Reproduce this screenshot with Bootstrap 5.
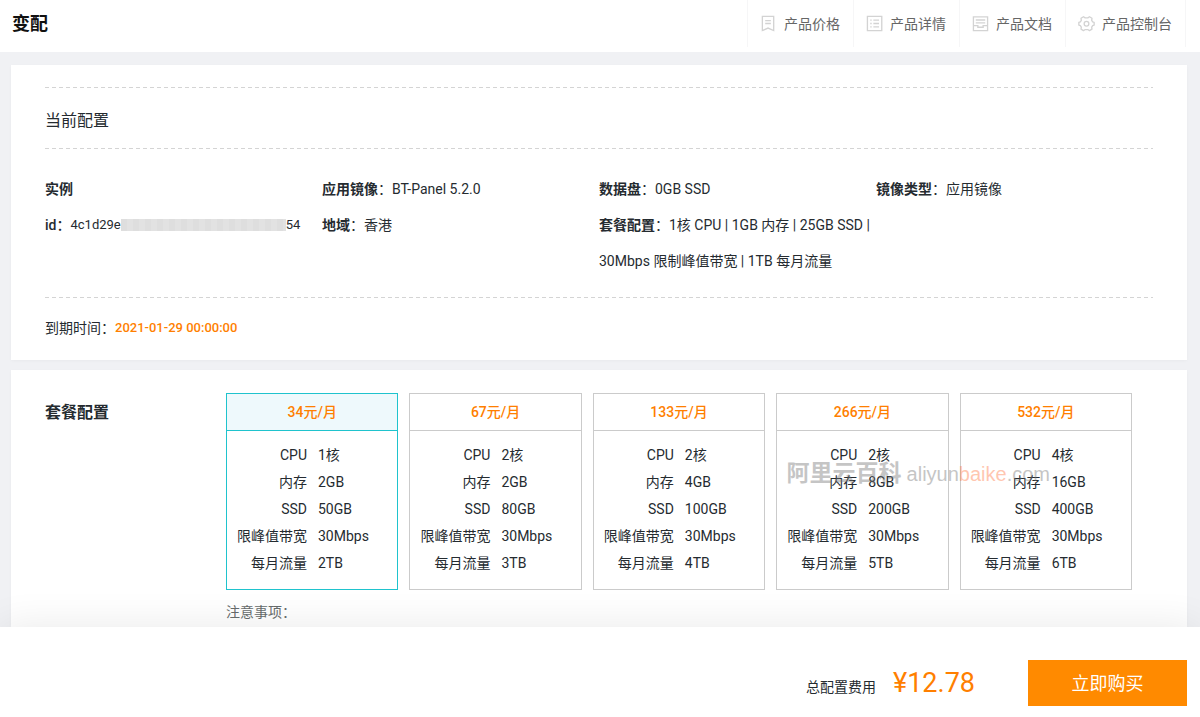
<!DOCTYPE html>
<html lang="zh-CN">
<head>
<meta charset="utf-8">
<meta name="viewport" content="width=device-width, initial-scale=1">
<title>变配</title>
<link rel="stylesheet" href="https://cdn.jsdelivr.net/npm/bootstrap@5.3.0/dist/css/bootstrap.min.css">
<style>
  body { font-family: Roboto, "Noto Sans CJK SC", sans-serif; font-size: 14px; line-height: 20px; color: #252b30; background: #f0f1f4; }
  .topbar { height: 52px; padding: 0 14px 5px 12px; }
  .topbar h1 { font-size: 18px; line-height: 24px; color: #111; }
  .topnav { border-right: 1px solid #f6f6f7; }
  .topnav a { color: #666; border-left: 1px solid #f6f6f7; padding: 0 13px 0 12px; gap: 7px; }
  .topnav svg { width: 17px; height: 17px; fill: none; stroke: #d3d3d3; stroke-width: 1.4; }
  main { padding: 13px 13px 0 11px; gap: 10px; }
  .panel { background: #fff; padding: 22px 34px; box-shadow: 0 1px 3px rgba(0,0,0,.03); }
  .panel-plans { padding: 23px 34px 0; }
  .dash { height: 1px; background: repeating-linear-gradient(90deg, #d4d4d4 0 4px, transparent 4px 7px); }
  .title16 { font-size: 16px; line-height: 24px; }
  .current { padding: 21px 0 15px; }
  .info { line-height: 36px; padding: 22px 0 18px; }
  .info strong { font-weight: 700; }
  .medium { font-weight: 500; }
  .digits { font-size: 13px; line-height: 18px; }
  .masked { width: 165px; height: 12px; background: repeating-linear-gradient(90deg, #dedede 0 6px, #e2e2e2 6px 12px); }
  .accent { color: #ff7f00; }
  .plan-label { width: 181px; padding-top: 8px; }
  .plans { gap: 11px; margin-right: 21px; }
  .plan { flex: 1 1 0; border: 1px solid #cbcbcb; cursor: pointer; }
  .plan-price { border-bottom: 1px solid #cbcbcb; line-height: 36px; font-weight: 500; text-align: center; }
  .plan-body { padding: 11px 0 12px 10px; line-height: 27px; }
  .plan-line { gap: 11px; }
  .plan-key { width: 70px; text-align: right; white-space: nowrap; }
  .btn-check:checked + .plan, .btn-check:checked + .plan .plan-price { border-color: #1fc3cd; }
  .btn-check:checked + .plan .plan-price { background: #eef9fc; }
  .note { color: #666c6c; margin: 12px 0 0; line-height: 20px; }
  .watermark { right: 82px; top: 67px; line-height: 28px; gap: 5px; color: #777; opacity: .42; pointer-events: none; }
  .wm-cn { font-size: 23px; font-weight: 700; }
  .wm-en { font-family: "Liberation Sans", sans-serif; font-size: 20px; }
  .wm-en span { color: #ff7a45; }
  .paybar { z-index: 2; padding: 33px 13px 11px; background: #fff; box-shadow: 0 0 40px rgba(0,0,0,.09); }
  .total { font-size: 27px; line-height: 36px; margin: 0 53px 0 17px; }
  .buy { width: 159px; height: 46px; background: #ff8a00; color: #fff; font-size: 18px; border-radius: 0; padding: 0; }
  .buy:hover { background: #f07f00; color: #fff; }
</style>
</head>
<body>
<div class="d-flex flex-column min-vh-100">
  <header class="topbar bg-white d-flex justify-content-between align-items-center">
    <h1 class="fw-bold m-0">变配</h1>
    <nav class="topnav d-flex align-self-stretch">
      <a href="#" class="d-flex align-items-center text-decoration-none">
        <svg viewBox="0 0 18 18"><path d="M2.500 1.500h12v15L8.500 13.800 2.500 16.500zM5.500 6h6M5.500 9h6"/></svg>产品价格</a>
      <a href="#" class="d-flex align-items-center text-decoration-none">
        <svg viewBox="0 0 18 18"><path d="M1.500 1.500h15.200v15H1.500zM4.500 5.500H6M7.800 5.500h6M4.500 9H6M7.800 9h6M4.500 12.500H6M7.800 12.500h6"/></svg>产品详情</a>
      <a href="#" class="d-flex align-items-center text-decoration-none">
        <svg viewBox="0 0 18 18"><path d="M1.500 2h15v14.500h-15zM4 5.300h10M4 8.300h10M1.500 11.300h4.700v1.700h5.600v-1.700h4.700"/></svg>产品文档</a>
      <a href="#" class="d-flex align-items-center text-decoration-none">
        <svg viewBox="0 0 18 18"><path stroke-linejoin="round" d="M5.800 1.800 7.600 3h2.800l1.800-1.200 2.600 1.600-.3 2.200 1 1.600 1.600.6v2.800l-1.600.6-1 1.600.3 2.200-2.600 1.600-1.800-1.200H7.600l-1.800 1.200L3.200 15l.3-2.200-1-1.600L.9 10.600V7.800l1.600-.6 1-1.600-.3-2.200z"/><circle cx="9" cy="9.200" r="2.500"/></svg>产品控制台</a>
    </nav>
  </header>

  <main class="d-flex flex-column flex-grow-1">
    <section class="panel">
      <div class="dash"></div>
      <h2 class="title16 current fw-normal m-0">当前配置</h2>
      <div class="dash"></div>
      <div class="info row g-0">
        <div class="col-3">
          <div><strong>实例</strong></div>
          <div class="d-flex align-items-center"><span class="medium">id：</span><span class="digits">4c1d29e</span><span class="masked"></span><span class="digits">54</span></div>
        </div>
        <div class="col-3">
          <div><strong>应用镜像</strong>：BT-Panel 5.2.0</div>
          <div><strong>地域</strong>：香港</div>
        </div>
        <div class="col-3">
          <div><strong>数据盘</strong>：0GB SSD</div>
          <div><strong>套餐配置</strong>：1核 CPU | 1GB 内存 | 25GB SSD | 30Mbps 限制峰值带宽 | 1TB 每月流量</div>
        </div>
        <div class="col-3">
          <div><strong>镜像类型</strong>：应用镜像</div>
        </div>
      </div>
      <div class="dash"></div>
      <div class="d-flex align-items-center pt-3 mt-1">到期时间：<span class="accent medium digits">2021-01-29 00:00:00</span></div>
    </section>

    <section class="panel panel-plans d-flex flex-grow-1">
      <h2 class="title16 plan-label fw-bold flex-shrink-0 m-0">套餐配置</h2>
      <div class="flex-grow-1">
        <div class="plans d-flex position-relative">
          <input class="btn-check" type="radio" name="plan" id="p34" checked>
          <label class="plan" for="p34">
            <span class="plan-price accent d-block">34元/月</span>
            <span class="plan-body d-block">
              <span class="plan-line d-flex"><span class="plan-key">CPU</span><span>1核</span></span>
              <span class="plan-line d-flex"><span class="plan-key">内存</span><span>2GB</span></span>
              <span class="plan-line d-flex"><span class="plan-key">SSD</span><span>50GB</span></span>
              <span class="plan-line d-flex"><span class="plan-key">限峰值带宽</span><span>30Mbps</span></span>
              <span class="plan-line d-flex"><span class="plan-key">每月流量</span><span>2TB</span></span>
            </span>
          </label>
          <input class="btn-check" type="radio" name="plan" id="p67">
          <label class="plan" for="p67">
            <span class="plan-price accent d-block">67元/月</span>
            <span class="plan-body d-block">
              <span class="plan-line d-flex"><span class="plan-key">CPU</span><span>2核</span></span>
              <span class="plan-line d-flex"><span class="plan-key">内存</span><span>2GB</span></span>
              <span class="plan-line d-flex"><span class="plan-key">SSD</span><span>80GB</span></span>
              <span class="plan-line d-flex"><span class="plan-key">限峰值带宽</span><span>30Mbps</span></span>
              <span class="plan-line d-flex"><span class="plan-key">每月流量</span><span>3TB</span></span>
            </span>
          </label>
          <input class="btn-check" type="radio" name="plan" id="p133">
          <label class="plan" for="p133">
            <span class="plan-price accent d-block">133元/月</span>
            <span class="plan-body d-block">
              <span class="plan-line d-flex"><span class="plan-key">CPU</span><span>2核</span></span>
              <span class="plan-line d-flex"><span class="plan-key">内存</span><span>4GB</span></span>
              <span class="plan-line d-flex"><span class="plan-key">SSD</span><span>100GB</span></span>
              <span class="plan-line d-flex"><span class="plan-key">限峰值带宽</span><span>30Mbps</span></span>
              <span class="plan-line d-flex"><span class="plan-key">每月流量</span><span>4TB</span></span>
            </span>
          </label>
          <input class="btn-check" type="radio" name="plan" id="p266">
          <label class="plan" for="p266">
            <span class="plan-price accent d-block">266元/月</span>
            <span class="plan-body d-block">
              <span class="plan-line d-flex"><span class="plan-key">CPU</span><span>2核</span></span>
              <span class="plan-line d-flex"><span class="plan-key">内存</span><span>8GB</span></span>
              <span class="plan-line d-flex"><span class="plan-key">SSD</span><span>200GB</span></span>
              <span class="plan-line d-flex"><span class="plan-key">限峰值带宽</span><span>30Mbps</span></span>
              <span class="plan-line d-flex"><span class="plan-key">每月流量</span><span>5TB</span></span>
            </span>
          </label>
          <input class="btn-check" type="radio" name="plan" id="p532">
          <label class="plan" for="p532">
            <span class="plan-price accent d-block">532元/月</span>
            <span class="plan-body d-block">
              <span class="plan-line d-flex"><span class="plan-key">CPU</span><span>4核</span></span>
              <span class="plan-line d-flex"><span class="plan-key">内存</span><span>16GB</span></span>
              <span class="plan-line d-flex"><span class="plan-key">SSD</span><span>400GB</span></span>
              <span class="plan-line d-flex"><span class="plan-key">限峰值带宽</span><span>30Mbps</span></span>
              <span class="plan-line d-flex"><span class="plan-key">每月流量</span><span>6TB</span></span>
            </span>
          </label>
          <div class="watermark position-absolute d-flex align-items-center">
            <span class="wm-cn">阿里云百科</span><span class="wm-en">aliyun<span>baike</span>.com</span>
          </div>
        </div>
        <p class="note">注意事项：</p>
      </div>
    </section>
  </main>

  <footer class="paybar sticky-bottom d-flex justify-content-end align-items-center">
    <div class="d-flex align-items-baseline">
      <span>总配置费用</span>
      <span class="total accent">¥12.78</span>
    </div>
    <button type="button" class="buy btn">立即购买</button>
  </footer>
</div>
<script src="https://cdn.jsdelivr.net/npm/bootstrap@5.3.0/dist/js/bootstrap.bundle.min.js"></script>
</body>
</html>
